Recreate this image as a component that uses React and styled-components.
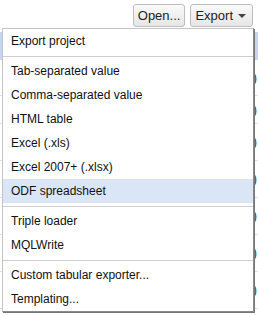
import React from 'react';
import styled, { createGlobalStyle } from 'styled-components';

const GlobalStyle = createGlobalStyle`
  html, body {
    margin: 0;
    padding: 0;
    background: #fff;
    font-family: "Liberation Sans", Arial, sans-serif;
  }
`;

const Page = styled.div`
  position: relative;
  width: 258px;
  height: 315px;
  overflow: hidden;
  background: #fff;
`;

const Toolbar = styled.div`
  display: flex;
  justify-content: flex-end;
  align-items: center;
  gap: 5px;
  height: 28px;
  padding: 0 5px 0 0;
  box-sizing: border-box;
`;

const Button = styled.button`
  display: flex;
  align-items: center;
  gap: 5px;
  height: 23px;
  margin-top: 3px;
  padding: 0 ${(p) => (p.$menu ? '6px' : '4px')} 0 4px;
  border: 1px solid #bdbdbd;
  border-radius: 3px;
  background: linear-gradient(#fafafa, #e6e6e6);
  color: #222;
  font: 13px "Liberation Sans", Arial, sans-serif;
  cursor: pointer;
`;

const Caret = styled.span`
  width: 0;
  height: 0;
  border-left: 4px solid transparent;
  border-right: 4px solid transparent;
  border-top: 4px solid #444;
`;

const Grid = styled.div`
  display: flex;
  flex-direction: column;
`;

const HeaderRow = styled.div`
  height: 28px;
  margin-top: 4px;
  background: #c6d5f3;
`;

const Row = styled.div`
  height: ${(p) => p.$h || 27}px;
  border-bottom: 1px solid #dde3ee;
  display: flex;
  justify-content: flex-end;
  align-items: center;
  padding-right: 1px;
  font-size: 12px;
  color: #333;
`;

const Menu = styled.div`
  position: absolute;
  top: 28px;
  left: 2px;
  width: 250px;
  background: #fff;
  border: 1px solid #c4c4c4;
  border-right-color: #8a8a8a;
  border-bottom-color: #8a8a8a;
  box-shadow: 1px 1px 0 #777;
  display: flex;
  flex-direction: column;
`;

const Item = styled.div`
  height: 24px;
  display: flex;
  align-items: center;
  padding-left: 8px;
  font-size: 12px;
  color: #111;
  background: ${(p) => (p.$active ? '#dae5f5' : 'transparent')};
`;

const Separator = styled.div`
  height: 1px;
  margin: 3px 0 2px;
  background: #cfcfcf;
`;

const groups = [
  ['Export project'],
  [
    'Tab-separated value',
    'Comma-separated value',
    'HTML table',
    'Excel (.xls)',
    'Excel 2007+ (.xlsx)',
    'ODF spreadsheet',
  ],
  ['Triple loader', 'MQLWrite'],
  ['Custom tabular exporter...', 'Templating...'],
];

export default function App() {
  return (
    <Page>
      <GlobalStyle />
      <Toolbar>
        <Button>Open...</Button>
        <Button $menu>
          Export <Caret />
        </Button>
      </Toolbar>
      <Grid>
        <HeaderRow />
        <Row $h={35}>)</Row>
        <Row>)</Row>
        <Row $h={36}>)</Row>
        <Row $h={36}>)</Row>
        <Row $h={36}>)</Row>
        <Row $h={36}>)</Row>
        <Row $h={36}>)</Row>
      </Grid>
      <Menu>
        {groups.map((group, gi) => (
          <React.Fragment key={gi}>
            {gi > 0 && <Separator />}
            {group.map((label) => (
              <Item key={label} $active={label === 'ODF spreadsheet'}>
                {label}
              </Item>
            ))}
          </React.Fragment>
        ))}
      </Menu>
    </Page>
  );
}
